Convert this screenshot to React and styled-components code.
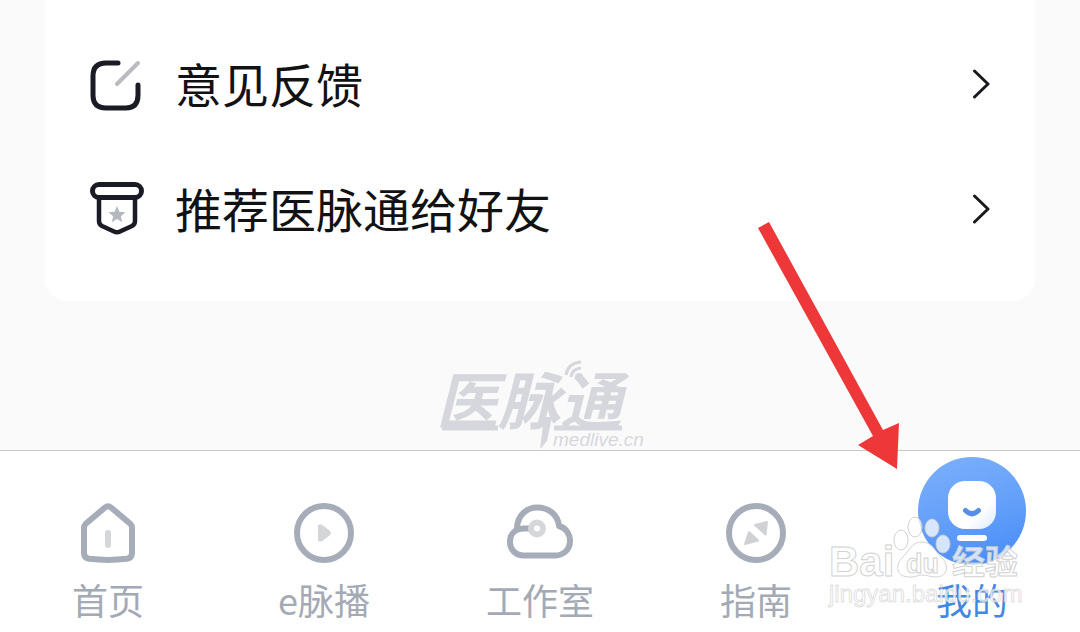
import React from "react";
import styled, { createGlobalStyle } from "styled-components";

const GlobalStyle = createGlobalStyle`
  * { box-sizing: border-box; }
  body {
    margin: 0;
    background: #fafafa;
    font-family: "Noto Sans CJK SC", "Noto Sans", sans-serif;
  }
`;

const Page = styled.div`
  position: relative;
  display: flex;
  flex-direction: column;
  min-height: 100vh;
  overflow: hidden;
`;

const Content = styled.main`
  flex: 1;
  display: flex;
  flex-direction: column;
  justify-content: space-between;
`;

const Card = styled.section`
  margin: 0 45px;
  padding: 22px 0 29px;
  background: #fff;
  border-radius: 0 0 22px 22px;
`;

const MenuRow = styled.button`
  display: flex;
  align-items: center;
  gap: 30px;
  width: 100%;
  height: 125px;
  padding: 0 44px;
  border: 0;
  background: none;
  color: #121214;
  font: inherit;
  font-size: 47px;
  line-height: 56px;
  text-align: left;
  cursor: pointer;
`;

const MenuLabel = styled.span`
  flex: 1;
  padding-bottom: 4px;
`;

const Icon = styled.svg`
  display: block;
  flex: none;
  fill: none;
  stroke-linecap: round;
  stroke-linejoin: round;
`;

const Brand = styled.div`
  display: flex;
  justify-content: center;
  height: 90px;
`;

const TabBar = styled.nav`
  display: grid;
  grid-template-columns: repeat(5, 1fr);
  background: #fff;
  border-top: 1px solid #c9c9c9;
`;

const Tab = styled.a`
  display: flex;
  flex-direction: column;
  align-items: center;
  justify-content: flex-end;
  gap: ${(p) => (p.$active ? "14px" : "16px")};
  height: 181px;
  padding-bottom: 13px;
  color: ${(p) => (p.$active ? "#4487e2" : "#a4aab5")};
  font-size: 36px;
  line-height: 40px;
  text-decoration: none;
`;

const Pointer = styled.svg`
  position: absolute;
  right: 180px;
  bottom: 160px;
  pointer-events: none;
`;

const Watermark = styled.svg`
  position: absolute;
  right: 52px;
  bottom: 18px;
  pointer-events: none;
  font-family: "Liberation Sans", "Noto Sans CJK SC", sans-serif;
`;

const FeedbackIcon = () => (
  <Icon width="56" height="56" viewBox="89 57 56 56" strokeWidth="5" aria-hidden="true">
    <path stroke="#1b1b25" d="M118 63H106Q93 63 93 76V95Q93 108 106 108H126Q138 108 138 95V85" />
    <path stroke="#b8bbc1" strokeWidth="4" d="M117 84L138 63" />
  </Icon>
);

const ShareIcon = () => (
  <Icon width="56" height="56" viewBox="89 182 56 56" strokeWidth="5" aria-hidden="true">
    <rect x="92.5" y="184.5" width="49" height="13" rx="6.5" stroke="#1b1b25" />
    <path stroke="#1b1b25" strokeWidth="4.5" d="M99 198V221Q99 224.500 102 226L114 231.500Q117 233 120 231.500L132 226Q135 224.500 135 221V198" />
    <path fill="#b4b8be" d="M117 206L119.400 211.700L125.500 212.200L120.800 216.200L122.300 222.200L117 219L111.700 222.200L113.200 216.200L108.500 212.200L114.600 211.700Z" />
  </Icon>
);

const Chevron = () => (
  <Icon width="20" height="32" viewBox="971 69 20 32" stroke="#1a1a1e" strokeWidth="3" aria-hidden="true">
    <path d="M974.500 71L988 84L974.500 97" />
  </Icon>
);

const TabIcon = ({ children }) => (
  <Icon width="72" height="60" viewBox="0 0 72 60" stroke="#a6adb9" strokeWidth="6" aria-hidden="true">
    {children}
  </Icon>
);

const HomeIcon = () => (
  <TabIcon>
    <path d="M33 4.500Q36 2 39 4.500L58.500 21Q60 22.500 60 25V50Q60 55 55 55.800Q36 58 17 55.800Q12 55 12 50V25Q12 22.500 13.500 21Z" />
    <path stroke="#d5d7d9" d="M36 30V42" />
  </TabIcon>
);

const PlayIcon = () => (
  <TabIcon>
    <circle cx="36" cy="30" r="27" />
    <path fill="#d3d6d9" stroke="#d3d6d9" strokeWidth="3" d="M31.500 23Q32 22.500 33 23L41 29Q42 30 41 31L33 37Q32 37.500 31.500 37Z" />
  </TabIcon>
);

const StudioIcon = () => (
  <TabIcon>
    <path d="M13 24C14 12 23 4.500 33 4.500C45 4.500 54 12 55 23C62 25 66 31 66 38C66 46 60 52.500 51 52.500H20C12 52.500 6 47 6 39C6 30 12 25.500 20 25.500H25" />
    <circle cx="33" cy="25.5" r="6" fill="#fff" stroke="#d5d7db" />
  </TabIcon>
);

const GuideIcon = () => (
  <TabIcon>
    <circle cx="36" cy="30" r="27" />
    <path fill="#cfd1d4" stroke="#cfd1d4" strokeWidth="2" d="M47 19L35 22L45.500 31.500Z M29 29L38 37.500L25 41Z" />
  </TabIcon>
);

const MineIcon = () => (
  <Icon width="108" height="108" viewBox="918 457 108 108" aria-hidden="true">
    <defs>
      <linearGradient id="mine-disc" x1="0.3" y1="0" x2="0.6" y2="1">
        <stop offset="0" stopColor="#7aaefb" />
        <stop offset="0.55" stopColor="#639ff9" />
        <stop offset="1" stopColor="#4a8ef8" />
      </linearGradient>
      <linearGradient id="mine-face" x1="0" y1="0" x2="1" y2="1">
        <stop offset="0.65" stopColor="#fff" />
        <stop offset="1" stopColor="#d9e8fe" />
      </linearGradient>
    </defs>
    <circle cx="972" cy="511" r="54" fill="url(#mine-disc)" />
    <rect x="948" y="481" width="48" height="48" rx="17" fill="url(#mine-face)" />
    <path stroke="#568fe6" strokeWidth="5" d="M965.500 510.500Q972 517 978.500 510.500" />
    <path stroke="#fff" strokeWidth="6" d="M960 538H984" />
  </Icon>
);

const BrandLogo = () => (
  <svg width="216" height="90" viewBox="432 361 216 90" fill="none" role="img" aria-label="医脉通 medlive.cn">
    <g fill="#d6d7dc" fontStyle="italic">
      <text x="436" y="425" fontFamily="Noto Sans CJK SC, sans-serif" fontSize="62" fontWeight="700">医脉通</text>
      <text x="553" y="447" fontFamily="Liberation Sans, sans-serif" fontSize="19">medlive.cn</text>
    </g>
    <g stroke="#d6d7dc" strokeWidth="3">
      <path d="M566 376Q568 364 581 363" />
      <path d="M571 378Q572 370 581 369" />
    </g>
    <circle cx="579" cy="378" r="4" fill="#d6d7dc" />
    <path d="M544 418L540 450L547 442L552 418Z" fill="#d6d7dc" />
    <path d="M442 429H498M554 429H622" stroke="#d6d7dc" strokeWidth="5" />
  </svg>
);

const menu = [
  { label: "意见反馈", Glyph: FeedbackIcon },
  { label: "推荐医脉通给好友", Glyph: ShareIcon },
];

const tabs = [
  { label: "首页", Glyph: HomeIcon },
  { label: "e脉播", Glyph: PlayIcon },
  { label: "工作室", Glyph: StudioIcon },
  { label: "指南", Glyph: GuideIcon },
  { label: "我的", Glyph: MineIcon, active: true },
];

export default function App() {
  return (
    <Page lang="zh-CN">
      <GlobalStyle />
      <Content>
        <Card>
          {menu.map(({ label, Glyph }) => (
            <MenuRow key={label} type="button">
              <Glyph />
              <MenuLabel>{label}</MenuLabel>
              <Chevron />
            </MenuRow>
          ))}
        </Card>
        <Brand>
          <BrandLogo />
        </Brand>
      </Content>
      <TabBar>
        {tabs.map(({ label, Glyph, active }) => (
          <Tab key={label} href="#" $active={active} aria-current={active ? "page" : undefined}>
            <Glyph />
            <span>{label}</span>
          </Tab>
        ))}
      </TabBar>
      <Pointer width="144" height="252" viewBox="756 220 144 252" aria-hidden="true">
        <path fill="#ee3739" d="M758 228L769 222L883 430L899 423L897 469L858 445L873 436Z" />
      </Pointer>
      <Watermark width="208" height="104" viewBox="820 510 208 104" aria-hidden="true">
        <g fill="#fff" fillOpacity="0.75" stroke="#cccccc" strokeOpacity="0.9">
          <ellipse cx="901" cy="540" rx="7" ry="10" />
          <ellipse cx="915" cy="527" rx="7" ry="10" />
          <ellipse cx="932" cy="528" rx="7" ry="9" />
          <ellipse cx="943" cy="544" rx="7" ry="9" />
          <path d="M922 542C933 542 935 552 942 558C950 566 947 577 936 577C930 577 927 575 922 575C917 575 914 578 908 577C896 576 895 565 902 558C909 552 911 542 922 542Z" />
          <text x="829" y="576" fontSize="42" fontWeight="700">Bai</text>
          <text x="906" y="573" fontSize="27" fontWeight="700">du</text>
          <text x="952" y="574" fontSize="33" fontWeight="700">经验</text>
          <text x="829" y="602" fontSize="24" strokeOpacity="0.6">jingyan.baidu.com</text>
        </g>
      </Watermark>
    </Page>
  );
}
